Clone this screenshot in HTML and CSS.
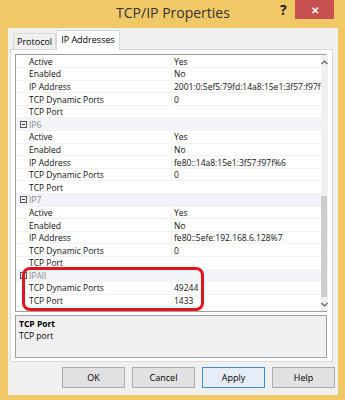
FILE: index.html
```html
<!DOCTYPE html>
<html lang="en">
<head>
    <meta charset="UTF-8">
    <title>TCP/IP Properties</title>
    <link rel="stylesheet" href="styles.css">
</head>
<body>
    <div class="window">
        <div class="titlebar">
            <span class="title">TCP/IP Properties</span>
            <span class="help-mark">?</span>
            <span class="close-btn">&#x2715;</span>
        </div>

        <div class="dialog">
            <div class="tabs">
                <div class="tab">Protocol</div>
                <div class="tab active">IP Addresses</div>
            </div>

            <div class="panel">
                <div class="grid">
                    <div class="rows">
                        <div class="row"><span class="gutter"></span><span class="name">Active</span><span class="value">Yes</span></div>
                        <div class="row"><span class="gutter"></span><span class="name">Enabled</span><span class="value">No</span></div>
                        <div class="row"><span class="gutter"></span><span class="name">IP Address</span><span class="value">2001:0:5ef5:79fd:14a8:15e1:3f57:f97f</span></div>
                        <div class="row"><span class="gutter"></span><span class="name">TCP Dynamic Ports</span><span class="value">0</span></div>
                        <div class="row"><span class="gutter"></span><span class="name">TCP Port</span><span class="value"></span></div>

                        <div class="row category"><span class="gutter"><i class="toggle"></i></span><span class="name">IP6</span></div>
                        <div class="row"><span class="gutter"></span><span class="name">Active</span><span class="value">Yes</span></div>
                        <div class="row"><span class="gutter"></span><span class="name">Enabled</span><span class="value">No</span></div>
                        <div class="row"><span class="gutter"></span><span class="name">IP Address</span><span class="value">fe80::14a8:15e1:3f57:f97f%6</span></div>
                        <div class="row"><span class="gutter"></span><span class="name">TCP Dynamic Ports</span><span class="value">0</span></div>
                        <div class="row"><span class="gutter"></span><span class="name">TCP Port</span><span class="value"></span></div>

                        <div class="row category"><span class="gutter"><i class="toggle"></i></span><span class="name">IP7</span></div>
                        <div class="row"><span class="gutter"></span><span class="name">Active</span><span class="value">Yes</span></div>
                        <div class="row"><span class="gutter"></span><span class="name">Enabled</span><span class="value">No</span></div>
                        <div class="row"><span class="gutter"></span><span class="name">IP Address</span><span class="value">fe80::5efe:192.168.6.128%7</span></div>
                        <div class="row"><span class="gutter"></span><span class="name">TCP Dynamic Ports</span><span class="value">0</span></div>
                        <div class="row"><span class="gutter"></span><span class="name">TCP Port</span><span class="value"></span></div>

                        <div class="row category"><span class="gutter"><i class="toggle"></i></span><span class="name">IPAll</span></div>
                        <div class="row"><span class="gutter"></span><span class="name">TCP Dynamic Ports</span><span class="value">49244</span></div>
                        <div class="row"><span class="gutter"></span><span class="name">TCP Port</span><span class="value">1433</span></div>
                    </div>

                    <div class="scrollbar">
                        <div class="arrow">
                            <svg width="7" height="5" viewBox="0 0 7 5"><path d="M0.5 4 L3.5 1 L6.5 4" fill="none" stroke="#606060" stroke-width="1.2"/></svg>
                        </div>
                        <div class="track">
                            <div class="thumb"></div>
                        </div>
                        <div class="arrow">
                            <svg width="7" height="5" viewBox="0 0 7 5"><path d="M0.5 1 L3.5 4 L6.5 1" fill="none" stroke="#606060" stroke-width="1.2"/></svg>
                        </div>
                    </div>

                    <div class="highlight"></div>
                </div>

                <div class="description">
                    <p class="desc-title">TCP Port</p>
                    <p class="desc-text">TCP port</p>
                </div>
            </div>

            <div class="buttons">
                <button>OK</button>
                <button>Cancel</button>
                <button class="default">Apply</button>
                <button>Help</button>
            </div>
        </div>
    </div>
</body>
</html>
```

FILE: styles.css
```css
*
{
    margin: 0;
    padding: 0;
    box-sizing: border-box;
}

body
{
    width: 345px;
    height: 400px;
    overflow: hidden;
    background: #f0c865;
    font-family: "Open Sans", "Noto Sans", sans-serif;
    color: #000;
}

.window
{
    width: 345px;
    height: 400px;
    display: flex;
    flex-direction: column;
    padding: 0 7px 5px 8px;
}

/* title bar */

.titlebar
{
    height: 28px;
    position: relative;
    display: flex;
    align-items: center;
    justify-content: center;
}

.title
{
    font-size: 14px;
    color: #333;
    margin-top: -4px;
}

.help-mark
{
    position: absolute;
    left: 272px;
    top: 0;
    font-size: 14px;
    font-weight: 700;
    color: #222;
}

.close-btn
{
    position: absolute;
    left: 287px;
    top: 0;
    width: 39px;
    height: 19px;
    background: #c75050;
    color: #fff;
    font-size: 10px;
    font-weight: 700;
    display: flex;
    align-items: center;
    justify-content: center;
}

/* dialog body */

.dialog
{
    flex: 1;
    background: #f0f0f0;
    display: flex;
    flex-direction: column;
    padding: 2px 5px 0 2px;
}

.tabs
{
    display: flex;
    align-items: flex-end;
    padding-left: 3px;
    height: 19px;
    position: relative;
    z-index: 1;
}

.tab
{
    font-size: 9px;
    height: 16px;
    padding: 0 3px;
    line-height: 15px;
    border: 1px solid #d9d9d9;
    border-bottom: none;
    background: #f0f0f0;
}

.tab.active
{
    height: 20px;
    background: #fff;
    border-color: #d9d9d9;
    line-height: 17px;
    padding: 0 4px;
    margin-bottom: -1px;
}

.panel
{
    height: 313px;
    background: #fff;
    border: 1px solid #d9d9d9;
    padding: 4px 5px 0 4px;
    display: flex;
    flex-direction: column;
}

/* property grid */

.grid
{
    height: 258px;
    border: 1px solid #a0a0a0;
    display: flex;
    position: relative;
    font-size: 8.5px;
}

.rows
{
    flex: 1;
    padding-top: 0.5px;
}

.row
{
    height: 12.6px;
    display: flex;
    align-items: center;
    border-bottom: 1px solid #f3f3f3;
}

.gutter
{
    width: 12px;
    height: 100%;
    display: flex;
    align-items: center;
    justify-content: center;
}

.name
{
    width: 143px;
    padding-left: 1px;
    white-space: nowrap;
    color: #111;
}

.value
{
    flex: 1;
    white-space: nowrap;
    overflow: hidden;
    border-left: 1px solid #f3f3f3;
    padding-left: 2px;
    color: #111;
}

.category
{
    background: #f2f4f9;
}

.category .name
{
    color: #8a8a8a;
}

.toggle
{
    width: 7px;
    height: 7px;
    border: 1px solid #555;
    position: relative;
    margin-left: 3px;
}

.toggle::after
{
    content: "";
    position: absolute;
    left: 1px;
    top: 2px;
    width: 3px;
    height: 1px;
    background: #333;
}

.scrollbar
{
    width: 14px;
    background: #f0f0f0;
    display: flex;
    flex-direction: column;
}

.arrow
{
    height: 14px;
    display: flex;
    align-items: center;
    justify-content: center;
}

.track
{
    flex: 1;
    display: flex;
    flex-direction: column;
    justify-content: flex-end;
    padding: 0 1px 0 0;
}

.thumb
{
    height: 101px;
    background: #cdcdcd;
}

.highlight
{
    position: absolute;
    left: 6px;
    top: 212px;
    width: 182px;
    height: 44px;
    border: 3px solid #e3141c;
    border-radius: 8px;
}

/* description box */

.description
{
    margin-top: 3px;
    height: 43px;
    border: 1px solid #a0a0a0;
    background: #f0f0f0;
    padding: 2px 3px;
    font-size: 8.5px;
}

.desc-title
{
    font-weight: 700;
    line-height: 12px;
}

.desc-text
{
    line-height: 12px;
}

/* dialog buttons */

.buttons
{
    display: flex;
    justify-content: flex-end;
    gap: 7px;
    padding-top: 5px;
    margin-right: -2px;
}

.buttons button
{
    width: 63px;
    height: 21px;
    font-family: "Open Sans", "Noto Sans", sans-serif;
    font-size: 9px;
    color: #000;
    background: #e1e1e1;
    border: 1px solid #adadad;
}

.buttons button.default
{
    border-color: #3c8ed8;
    background: #e5eef7;
}
```
